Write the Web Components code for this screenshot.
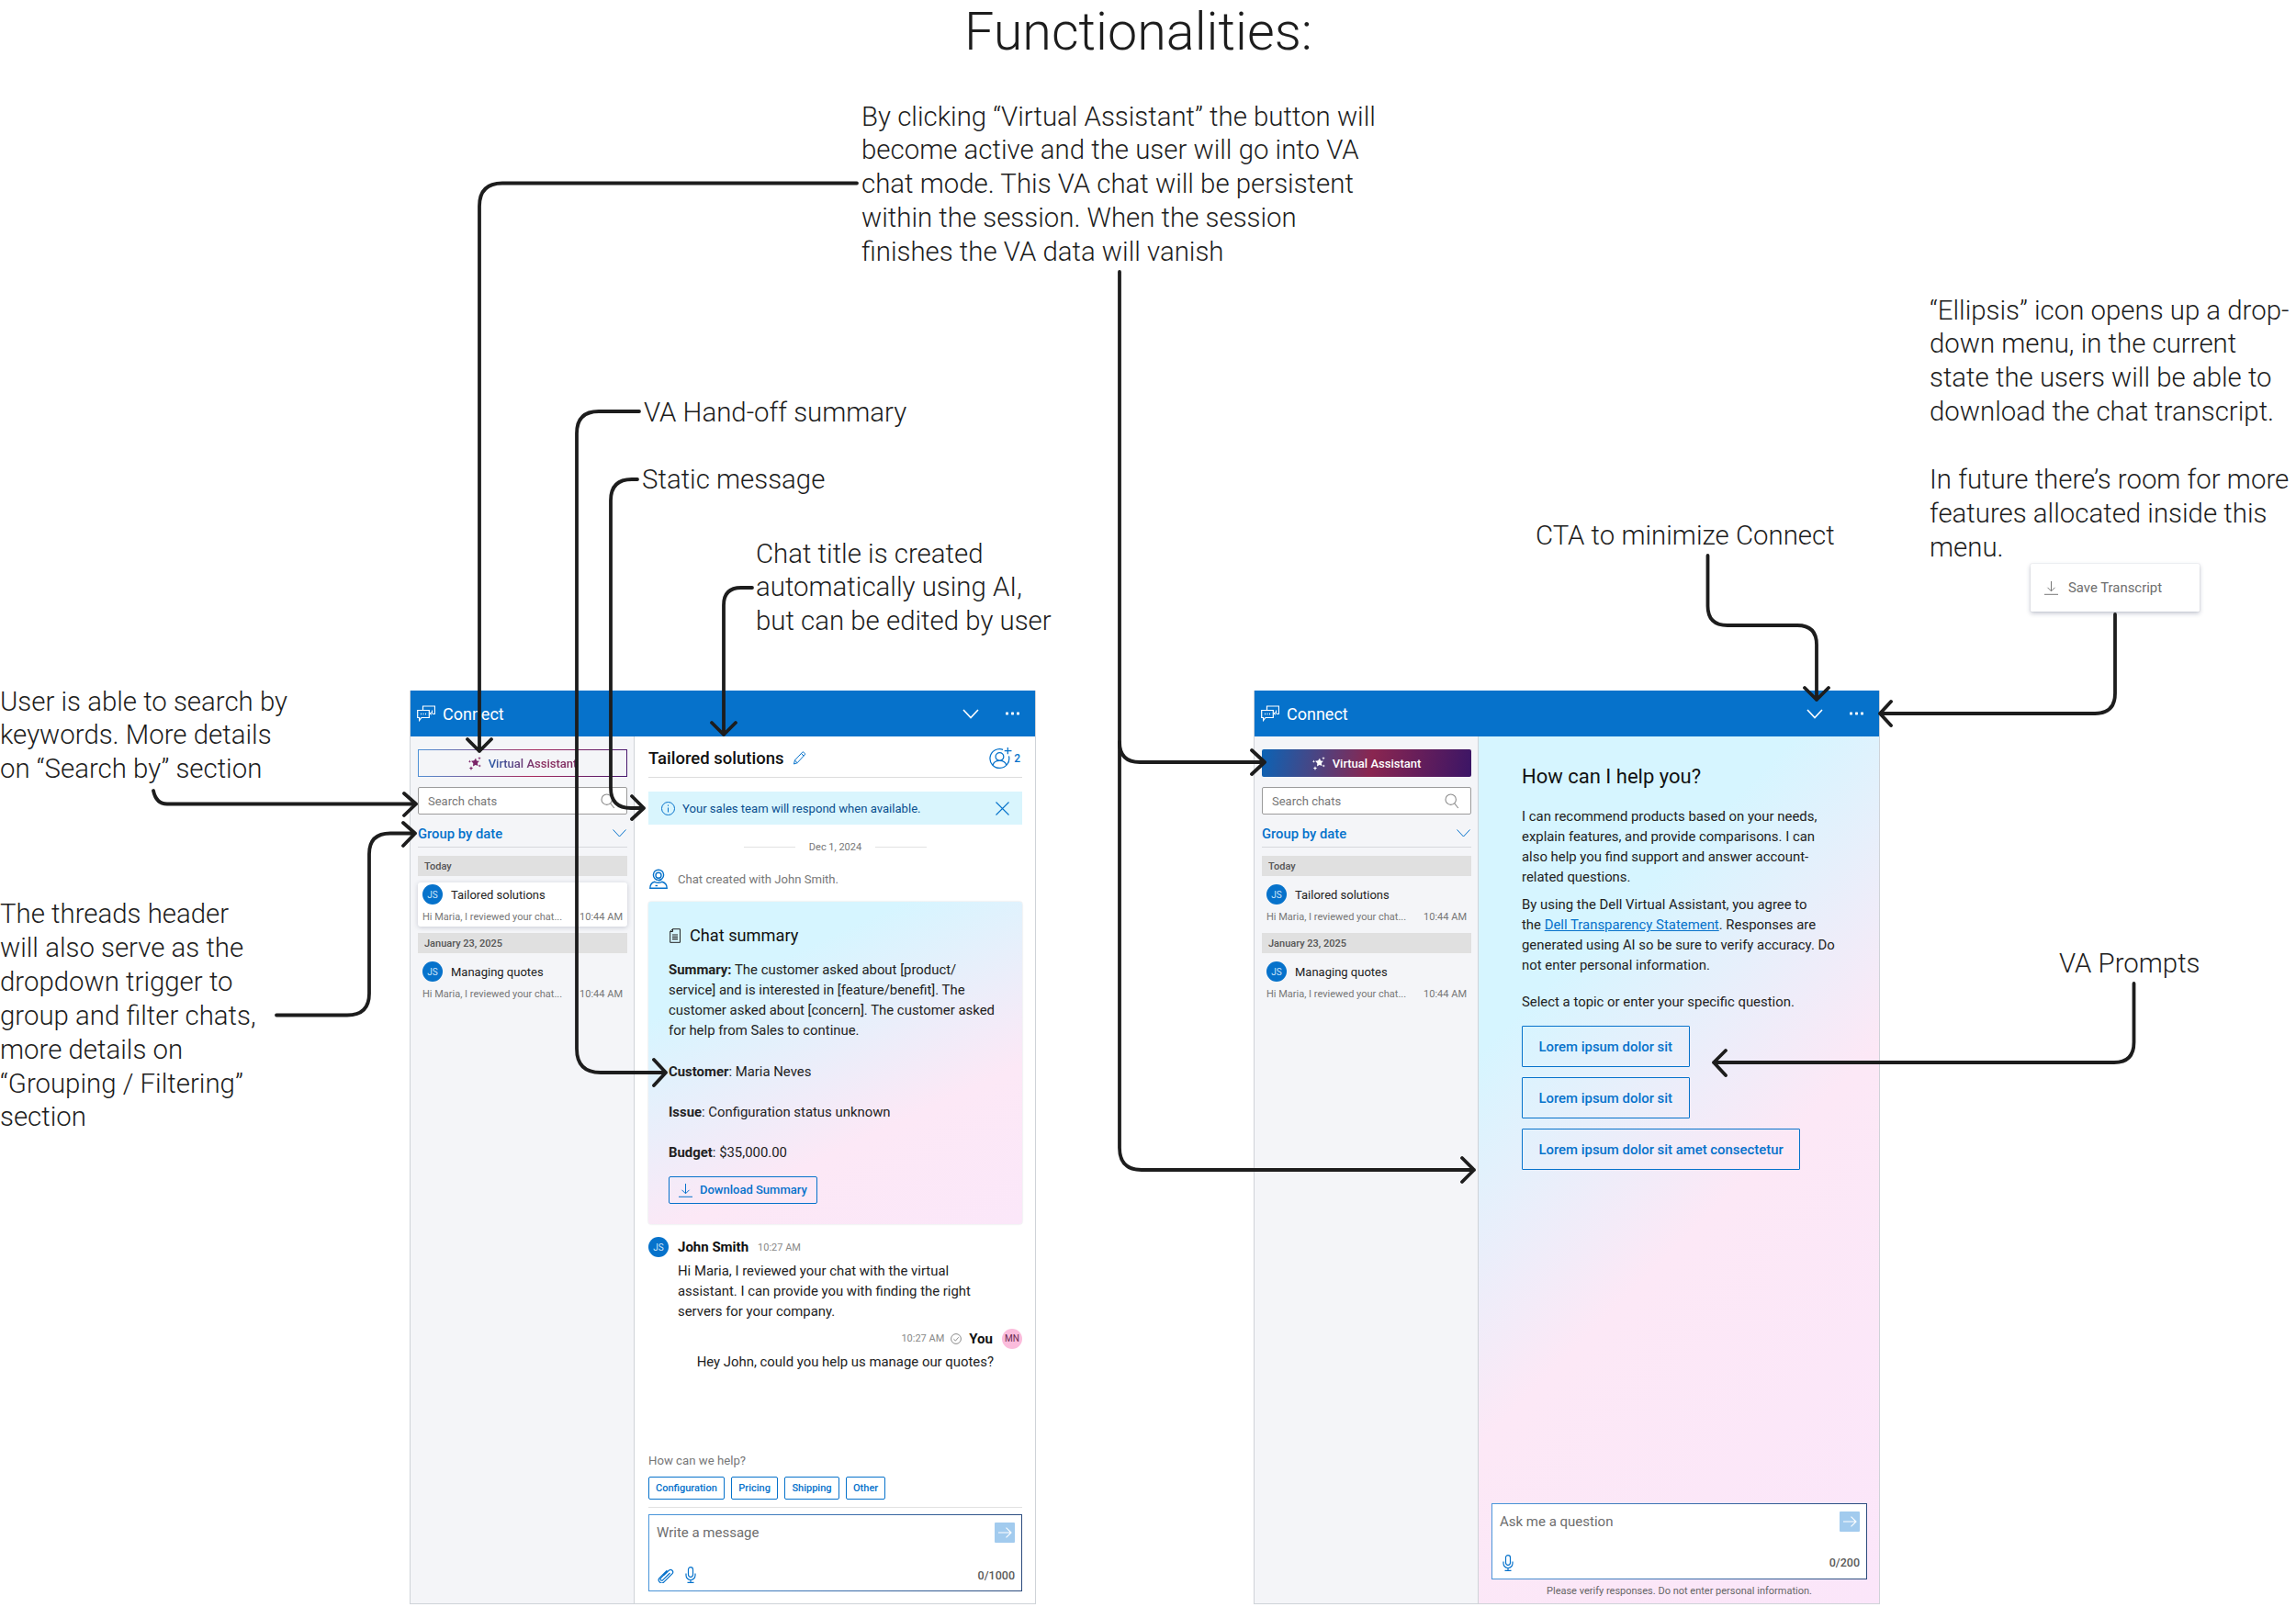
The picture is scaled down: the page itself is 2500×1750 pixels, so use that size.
<!DOCTYPE html>
<html>
<head>
<meta charset="utf-8">
<title>Functionalities</title>
<style>
  html, body { margin: 0; background: #fff; }
  body { font-family: Roboto, "Liberation Sans", sans-serif; }
</style>
</head>
<body>
<func-board></func-board>
<script>
// icons used in more than one component
const ICONS = {
  connect: `<svg width="20" height="18" viewBox="0 0 20 18" fill="none" stroke="#fff" stroke-width="1.2"><path d="M6.5 5V1h13v8.5H17"/><path d="M16.5 5.5v3.5h-2.5M14 9l1.6-1.4M14 9l1.6 1.4" stroke-width="1"/><path d="M.7 5.500h12.600v8H5L2.600 16.500v-3H.7z"/><path d="M4 9.500h1M6.500 9.500h1M9 9.500h1" stroke-width="1.300"/></svg>`,
  chevron: `<svg width="18" height="11" viewBox="0 0 18 11" fill="none" stroke="currentColor" stroke-width="1.6"><path d="M1 1l8 8.5L17 1"/></svg>`,
  chevronThin: `<svg width="15" height="9" viewBox="0 0 15 9" fill="none" stroke="currentColor" stroke-width="1"><path d="M.5.5l7 7.5 7-7.5"/></svg>`,
  dots: `<svg width="15" height="4" viewBox="0 0 15 4" fill="#fff"><rect x="0" y=".5" width="3" height="3" rx=".7"/><rect x="6" y=".5" width="3" height="3" rx=".7"/><rect x="12" y=".5" width="3" height="3" rx=".7"/></svg>`,
  sparkle: (c) => `<svg width="14" height="15" viewBox="0 0 14 15" fill="${c}"><path d="M8 1.800l1 2.600 2.900.4-2 2.300.6 3-2.800-1.200-2.700 1.500.3-3.100L3 4.800l3.100-.6z"/><path d="M12 0l.5 1.200 1.300.5-1.300.5-.5 1.300-.5-1.300-1.200-.5 1.200-.5zM3 10.300l.7 1.600 1.600.6-1.600.7-.7 1.700-.7-1.700-1.700-.7 1.700-.6zM1.400 3.600l.5 1.100 1.100.5-1.100.5-.5 1.100-.4-1.100-1-.5 1-.5zM12.200 8.400l.5 1.100 1.200.5-1.200.5-.5 1.100-.5-1.100-1.100-.5 1.100-.5z"/></svg>`,
  search: `<svg width="16" height="17" viewBox="0 0 16 17" fill="none" stroke="#8a8a8a" stroke-width="1.1"><circle cx="6.700" cy="6.700" r="5.700"/><path d="M10.800 11l4 5"/></svg>`,
  download: (c) => `<svg width="15" height="15" viewBox="0 0 15 15" fill="none" stroke="${c}" stroke-width="1"><path d="M7.500 0v10.500M3.500 6.800l4 4 4-4M0 14.300h15"/></svg>`,
  mic: `<svg width="12" height="18" viewBox="0 0 12 18" fill="none" stroke="#0672cb" stroke-width="1.2"><rect x="3.500" y=".7" width="5" height="10.600" rx="2.500"/><path d="M1 7.500v2a5 5 0 0 0 10 0v-2M6 14.500v2.800M2.500 17.300h7"/></svg>`,
  clip: `<svg width="20" height="17" viewBox="0 0 20 17" fill="none" stroke="#0672cb" stroke-width="1.2"><path d="M7.500 8.500l6-5.500a2.600 2.600 0 0 1 3.600 3.700l-9 9a3.300 3.300 0 0 1-5-4.400l8.200-8"/><path d="M14.500 6l-7.800 7.600a1.500 1.500 0 0 1-2.300-2l7.500-7.500"/></svg>`,
  send: `<svg width="15" height="12" viewBox="0 0 15 12" fill="none" stroke="#fff" stroke-width="1.1"><path d="M0 6h14M8.500.7L14 6l-5.500 5.300"/></svg>`,
  pencil: `<svg width="15" height="15" viewBox="0 0 14 15" fill="none" stroke="#0672cb" stroke-width="1"><path d="M1 14l.9-4L10 1.300a1.200 1.200 0 0 1 1.700 0l1 1a1.200 1.200 0 0 1 0 1.700L4.700 12.700z"/><path d="M1.900 10l2.800 2.700M9 2.500l2.700 2.700"/></svg>`,
  personAdd: `<svg width="25" height="24" viewBox="0 0 24 23" fill="none" stroke="#0672cb" stroke-width="1.2"><path d="M14.500 2.200A10 10 0 1 0 20.600 9"/><circle cx="11" cy="9.500" r="4.200"/><path d="M4 18.500c.5-3 3-4.800 7-4.800s6.400 1.800 7 4.800"/><path d="M19.500 0v7M16 3.500h7.500"/></svg>`,
  info: `<svg width="15" height="15" viewBox="0 0 15 15" fill="none" stroke="#0672cb" stroke-width="1"><circle cx="7.500" cy="7.500" r="7"/><path d="M7.500 6.500v5M7.500 3.500v1.300"/></svg>`,
  close: `<svg width="15" height="15" viewBox="0 0 15 15" fill="none" stroke="#0672cb" stroke-width="1.1"><path d="M.5.500l14 14M14.500.500l-14 14"/></svg>`,
  agent: `<svg width="20" height="22" viewBox="0 0 20 22" fill="none" stroke="#0672cb" stroke-width="1.4"><circle cx="10" cy="6.800" r="5.600"/><circle cx="10" cy="7.200" r="3"/><path d="M13.200 11.500c-.8 1-2 1.300-3.200 1.300"/><path d="M.8 21.300c0-3.800 2-6.200 5-7 2.500 1.200 5.500 1.200 8 0 3 .8 5.400 3.200 5.400 7z"/><path d="M6.500 18.500h2.500"/></svg>`,
  doc: `<svg width="12" height="16" viewBox="0 0 12 16" fill="none" stroke="#222" stroke-width="1"><path d="M3.500.7h8v14.600H.7V3.500z"/><path d="M3.500.7v2.800H.7"/><path d="M3 7h6M3 9.300h6M3 11.600h6" stroke-width="1.2"/></svg>`,
  check: `<svg width="12" height="12" viewBox="0 0 12 12" fill="none" stroke="#7d7d7d" stroke-width=".9"><circle cx="6" cy="6" r="5.400"/><path d="M3.400 6.200l2 1.900 3.300-3.800"/></svg>`
};

const BASE = `*{box-sizing:border-box} :host{font-family:Roboto,"Liberation Sans",sans-serif}`;

// a note on the canvas, with text lines passed in the slot
class AnnoNote extends HTMLElement {
  constructor() {
    super();
    this.attachShadow({ mode: 'open' });
    this.shadowRoot.innerHTML = `
      <style>
        ${BASE}
        :host {
          display: block;
          position: absolute;
          font-size: var(--size, 29.4px);
          line-height: var(--lh, 36.9px);
          font-weight: 300;
          color: #1d1d1d;
          white-space: nowrap;
        }
      </style>
      <slot></slot>`;
  }
}

class ConnectHeader extends HTMLElement {
  constructor() {
    super();
    this.attachShadow({ mode: 'open' });
    this.shadowRoot.innerHTML = `
      <style>
        ${BASE}
        :host {
          display: flex;
          align-items: center;
          height: 50px;
          background: #0672cb;
          color: #fff;
          padding: 0 17px 0 7px;
          flex: none;
        }
        .title { font-size: 18px; margin-left: 8px; flex: 1; }
        .chev { display: flex; margin-right: 29px; }
        .dots { display: flex; }
      </style>
      ${ICONS.connect}
      <span class="title">Connect</span>
      <span class="chev">${ICONS.chevron}</span>
      <span class="dots">${ICONS.dots}</span>`;
  }
}

class VaButton extends HTMLElement {
  constructor() {
    super();
    this.attachShadow({ mode: 'open' });
    const active = this.hasAttribute('active');
    this.shadowRoot.innerHTML = `
      <style>
        ${BASE}
        :host {
          display: flex;
          align-items: center;
          justify-content: center;
          gap: 8px;
          height: 30px;
          font-size: 13px;
          font-weight: 500;
          flex: none;
        }
        :host([active]) {
          background: linear-gradient(100deg, #0b63b5 0%, #8a2650 52%, #3b1566 100%);
          border-radius: 2px;
          color: #fff;
        }
        :host(:not([active])) {
          border: 1px solid;
          border-image: linear-gradient(100deg, #4d93d9 0%, #a8295d 55%, #45186e 100%) 1;
        }
        .grad {
          background: linear-gradient(90deg, #2a5aa8 0%, #8a2a5c 60%, #7a2a60 100%);
          -webkit-background-clip: text;
          background-clip: text;
          color: transparent;
        }
        svg { display: block; }
      </style>
      ${ICONS.sparkle(active ? '#fff' : '#7b2468')}
      <span class="${active ? '' : 'grad'}">Virtual Assistant</span>`;
  }
}

class ThreadItem extends HTMLElement {
  constructor() {
    super();
    this.attachShadow({ mode: 'open' });
    this.shadowRoot.innerHTML = `
      <style>
        ${BASE}
        :host {
          display: block;
          height: 48px;
          margin-top: 7px;
          padding: 2px 5px 0 5px;
          border-radius: 3px;
        }
        :host([selected]) { background: #fff; box-shadow: 0 1px 5px rgba(40,50,80,.22); }
        .top { display: flex; align-items: center; gap: 9px; height: 22px; font-size: 13px; color: #222; }
        .avatar {
          width: 22px; height: 22px; border-radius: 50%;
          background: #0672cb; color: #cfe6fa;
          font-size: 10px; display: flex; align-items: center; justify-content: center;
        }
        .sub {
          display: flex; justify-content: space-between; align-items: center;
          margin-top: 2px; height: 22px; font-size: 11px; color: #777;
        }
      </style>
      <div class="top"><span class="avatar">JS</span><span>${this.getAttribute('name')}</span></div>
      <div class="sub"><span>Hi Maria, I reviewed your chat...</span><span>10:44 AM</span></div>`;
  }
}

class ChatSidebar extends HTMLElement {
  constructor() {
    super();
    this.attachShadow({ mode: 'open' });
    const active = this.hasAttribute('active') ? 'active' : '';
    const selected = active ? '' : 'selected';
    this.shadowRoot.innerHTML = `
      <style>
        ${BASE}
        :host {
          display: flex;
          flex-direction: column;
          width: 244px;
          flex: none;
          background: #f4f5f8;
          border-right: 1px solid #cfd3d8;
          padding: 14px 7px 0 8px;
        }
        .search {
          display: flex; align-items: center; justify-content: space-between;
          height: 30px; margin-top: 11px; padding: 0 12px 0 10px;
          background: #fff; border: 1px solid #9b9b9b; border-radius: 2px;
          font-size: 13px; color: #777;
        }
        .group {
          display: flex; align-items: center; justify-content: space-between;
          height: 29px; margin-top: 7px; padding-right: 1px; padding-bottom: 1px;
          border-bottom: 1px solid #d6d8dc;
          color: #0672cb; font-size: 14.8px; font-weight: 500;
        }
        .band {
          height: 22px; display: flex; align-items: center;
          background: #e0e0e0; color: #555;
          font-size: 11px; font-weight: 500; padding-left: 7px; margin-top: 7px;
        }
        .group + .band { margin-top: 9px; }
        .group span:last-child { display: flex; }
      </style>
      <va-button ${active}></va-button>
      <div class="search"><span>Search chats</span>${ICONS.search}</div>
      <div class="group"><span>Group by date</span><span>${ICONS.chevronThin}</span></div>
      <div class="band">Today</div>
      <thread-item name="Tailored solutions" ${selected}></thread-item>
      <div class="band">January 23, 2025</div>
      <thread-item name="Managing quotes"></thread-item>`;
  }
}

class ChatComposer extends HTMLElement {
  constructor() {
    super();
    this.attachShadow({ mode: 'open' });
    const hasClip = this.hasAttribute('attach');
    this.shadowRoot.innerHTML = `
      <style>
        ${BASE}
        :host {
          display: flex;
          flex-direction: column;
          flex: none;
          height: var(--h, 84px);
          background: #fff;
          border: 1.5px solid;
          border-image: linear-gradient(100deg, #4a97dc 0%, #3b6fae 50%, #2b4a7c 100%) 1;
          padding: 8px 7px 6px 8px;
        }
        .top { display: flex; justify-content: space-between; color: #6e6e6e; font-size: 15px; line-height: 22px; }
        .send {
          width: 22px; height: 22px; background: #a2cbee; border-radius: 1px;
          display: flex; align-items: center; justify-content: center;
        }
        .bottom { display: flex; align-items: center; gap: 11px; margin-top: auto; height: 22px; }
        .bottom.mic-only { padding-left: 3px; }
        .count { margin-left: auto; font-size: 12.5px; font-weight: 500; color: #5a5a5a; }
        svg { display: block; }
      </style>
      <div class="top"><span>${this.getAttribute('placeholder')}</span><span class="send">${ICONS.send}</span></div>
      <div class="bottom ${hasClip ? '' : 'mic-only'}">${hasClip ? ICONS.clip : ''}${ICONS.mic}<span class="count">${this.getAttribute('count')}</span></div>`;
  }
}

class SummaryCard extends HTMLElement {
  constructor() {
    super();
    this.attachShadow({ mode: 'open' });
    this.shadowRoot.innerHTML = `
      <style>
        ${BASE}
        :host {
          display: block;
          flex: none;
          margin-top: 14px;
          height: 351px;
          padding: 25px 22px 0 22px;
          border-radius: 3px;
          background: linear-gradient(155deg, #d6f5ff 24%, #fce8f6 68%, #fbe7f9 100%);
          box-shadow: 0 0 1.5px rgba(60,70,90,.3);
          font-size: 14.9px;
          line-height: 22px;
          color: #222;
        }
        h3 {
          display: flex; align-items: center; gap: 10px;
          margin: 0 0 14px 0; height: 24px;
          font-size: 18.2px; font-weight: 400; color: #111;
          padding-left: 1px;
        }
        p { margin: 22px 0 0 0; white-space: nowrap; }
        p.first { margin: 0; }
        p.customer { margin-top: 23px; }
        b { font-weight: 700; }
        .dl {
          display: inline-flex; align-items: center; gap: 8px;
          height: 30px; margin-top: 15px; padding: 0 10px;
          border: 1px solid #0672cb; border-radius: 2px;
          color: #0672cb; font-size: 13px; font-weight: 500;
        }
      </style>
      <h3>${ICONS.doc}<span>Chat summary</span></h3>
      <p class="first"><b>Summary:</b> The customer asked about [product/<br>service] and is interested in [feature/benefit]. The<br>customer asked about [concern]. The customer asked<br>for help from Sales to continue.</p>
      <p class="customer"><b>Customer</b>: Maria Neves</p>
      <p><b>Issue</b>: Configuration status unknown</p>
      <p><b>Budget</b>: $35,000.00</p>
      <span class="dl">${ICONS.download('#0672cb')}<span>Download Summary</span></span>`;
  }
}

class ChatThread extends HTMLElement {
  constructor() {
    super();
    this.attachShadow({ mode: 'open' });
    this.shadowRoot.innerHTML = `
      <style>
        ${BASE}
        :host {
          display: flex;
          flex-direction: column;
          flex: 1;
          min-width: 0;
          background: #fff;
          padding: 0 14px 13px 15px;
          font-size: 14.9px;
          color: #222;
        }
        .title {
          display: flex; align-items: center; height: 45px; padding-top: 3px; flex: none;
          border-bottom: 1px solid #dcdcdc;
          font-size: 18.5px; font-weight: 500; color: #111;
        }
        .title svg { margin-left: 10px; }
        .people { margin-left: auto; margin-right: 2px; display: flex; align-items: center; gap: 2px; color: #0672cb; font-size: 12px; font-weight: 500; }
        .people svg { margin: 0; }
        .banner {
          display: flex; align-items: center; gap: 8px;
          height: 36px; margin-top: 15px; padding: 0 14px; flex: none;
          background: #d9f5fd; color: #0a4f8f; font-size: 13.1px;
        }
        .banner svg:last-child { margin-left: auto; }
        .date {
          display: flex; align-items: center; justify-content: center; gap: 15px; flex: none;
          height: 16px; margin-top: 16px; font-size: 11px; color: #777;
        }
        .date i { width: 56px; height: 1px; background: #e2e2e2; }
        .created { display: flex; align-items: center; gap: 12px; height: 22px; margin-top: 16px; padding-left: 1px; color: #777; font-size: 13.1px; flex: none; }
        .created span { margin-left: -1px; }
        .msg-head { display: flex; align-items: center; height: 22px; margin-top: 14px; flex: none; }
        .avatar {
          width: 22px; height: 22px; border-radius: 50%;
          background: #0672cb; color: #cfe6fa;
          font-size: 10px; display: flex; align-items: center; justify-content: center;
        }
        .avatar.me { background: #fbbcdc; color: #6a2a50; }
        .msg-head b { font-weight: 700; margin-left: 10px; font-size: 15px; color: #111; }
        .time { font-size: 11px; color: #888; margin-left: 10px; }
        .msg { margin: 4px 0 0 32px; line-height: 22px; white-space: nowrap; }
        .mine { justify-content: flex-end; margin-top: 7.5px; }
        .mine .check { display: flex; margin-left: 7px; }
        .mine b { margin-left: 8px; margin-right: 10px; }
        .msg-mine { margin: 3.5px 31px 0 0; line-height: 22px; text-align: right; white-space: nowrap; }
        .spacer { flex: 1; }
        .help { font-size: 13.2px; line-height: 22px; color: #777; }
        .chips { display: flex; gap: 7.5px; margin-top: 5.5px; flex: none; }
        .chip {
          display: flex; align-items: center; height: 25.5px; padding: 0 7px;
          border: 1px solid #0672cb; border-radius: 2px;
          color: #0672cb; font-size: 11px; font-weight: 500;
        }
        .rule { height: 1px; background: #e2e2e2; margin: 7.5px 0 7.5px 0; flex: none; }
      </style>
      <div class="title">Tailored solutions ${ICONS.pencil}<span class="people">${ICONS.personAdd}<span>2</span></span></div>
      <div class="banner">${ICONS.info}<span>Your sales team will respond when available.</span>${ICONS.close}</div>
      <div class="date"><i></i><span>Dec 1, 2024</span><i></i></div>
      <div class="created">${ICONS.agent}<span>Chat created with John Smith.</span></div>
      <summary-card></summary-card>
      <div class="msg-head"><span class="avatar">JS</span><b>John Smith</b><span class="time">10:27 AM</span></div>
      <div class="msg">Hi Maria, I reviewed your chat with the virtual<br>assistant. I can provide you with finding the right<br>servers for your company.</div>
      <div class="msg-head mine"><span class="time">10:27 AM</span><span class="check">${ICONS.check}</span><b>You</b><span class="avatar me">MN</span></div>
      <div class="msg-mine">Hey John, could you help us manage our quotes?</div>
      <div class="spacer"></div>
      <div class="help">How can we help?</div>
      <div class="chips"><span class="chip">Configuration</span><span class="chip">Pricing</span><span class="chip">Shipping</span><span class="chip">Other</span></div>
      <div class="rule"></div>
      <chat-composer placeholder="Write a message" count="0/1000" attach></chat-composer>`;
  }
}

class VaThread extends HTMLElement {
  constructor() {
    super();
    this.attachShadow({ mode: 'open' });
    this.shadowRoot.innerHTML = `
      <style>
        ${BASE}
        :host {
          display: flex;
          flex-direction: column;
          flex: 1;
          min-width: 0;
          background: linear-gradient(135deg, #d6f5ff 25%, #fce8f6 56%, #fbe6fa 100%);
          padding: 29px 13px 0 14px;
          font-size: 14.9px;
          line-height: 22px;
          color: #222;
        }
        .body { padding-left: 33px; flex: 1; }
        h2 { margin: 0; height: 30px; font-size: 22px; line-height: 30px; font-weight: 400; color: #111; }
        p { margin: 8px 0 0 0; white-space: nowrap; }
        p.a { margin-top: 17px; }
        p.c { margin-top: 18px; }
        a { color: #0672cb; text-decoration: underline; }
        .prompts { display: flex; flex-direction: column; align-items: flex-start; gap: 11px; margin-top: 15px; }
        .prompt {
          display: flex; align-items: center; height: 45px; padding: 0 17.5px;
          border: 1px solid #0672cb; border-radius: 1px;
          color: #0672cb; font-weight: 500; font-size: 14.9px;
        }
        chat-composer { --h: 83px; }
        .note { height: 26px; display: flex; align-items: center; justify-content: center; font-size: 11px; color: #666; }
      </style>
      <div class="body">
        <h2>How can I help you?</h2>
        <p class="a">I can recommend products based on your needs,<br>explain features, and provide comparisons. I can<br>also help you find support and answer account-<br>related questions.</p>
        <p>By using the Dell Virtual Assistant, you agree to<br>the <a>Dell Transparency Statement</a>. Responses are<br>generated using AI so be sure to verify accuracy. Do<br>not enter personal information.</p>
        <p class="c">Select a topic or enter your specific question.</p>
        <div class="prompts">
          <span class="prompt">Lorem ipsum dolor sit</span>
          <span class="prompt">Lorem ipsum dolor sit</span>
          <span class="prompt">Lorem ipsum dolor sit amet consectetur</span>
        </div>
      </div>
      <chat-composer placeholder="Ask me a question" count="0/200"></chat-composer>
      <div class="note">Please verify responses. Do not enter personal information.</div>`;
  }
}

class ConnectPanel extends HTMLElement {
  constructor() {
    super();
    this.attachShadow({ mode: 'open' });
    const active = this.hasAttribute('active') ? 'active' : '';
    this.shadowRoot.innerHTML = `
      <style>
        ${BASE}
        :host {
          display: flex;
          flex-direction: column;
          position: absolute;
          top: 752px;
          width: 682px;
          height: 995px;
          border: 1px solid #cfd3d8;
          border-top: 0;
        }
        .body { display: flex; flex: 1; min-height: 0; }
      </style>
      <connect-header></connect-header>
      <div class="body">
        <chat-sidebar ${active}></chat-sidebar>
        ${active ? '<va-thread></va-thread>' : '<chat-thread></chat-thread>'}
      </div>`;
  }
}

class SaveMenu extends HTMLElement {
  constructor() {
    super();
    this.attachShadow({ mode: 'open' });
    this.shadowRoot.innerHTML = `
      <style>
        ${BASE}
        :host {
          display: flex;
          align-items: center;
          gap: 11px;
          position: absolute;
          left: 2211px; top: 614px;
          width: 184px; height: 52px;
          padding-left: 15px;
          background: #fff;
          border-radius: 1px;
          box-shadow: 0 0 1px rgba(40,50,90,.4), 0 2px 5px rgba(40,50,90,.28);
          font-size: 14.9px;
          color: #6e6e6e;
        }
      </style>
      ${ICONS.download('#777')}<span>Save Transcript</span>`;
  }
}

// the connector lines drawn over everything
class ArrowLayer extends HTMLElement {
  constructor() {
    super();
    this.attachShadow({ mode: 'open' });
    const paths = [
      // Virtual Assistant
      'M933 199.5H547Q522 199.5 522 224.5V818M509 805L522 818L535 805',
      // hand-off summary
      'M696 448H652Q628 448 628 472V1142Q628 1168 654 1168H725M712 1154L725 1168L712 1182',
      // static message
      'M694 522H688Q665 522 665 545V858Q665 880 687 880H701M688 867L701 880L688 892',
      // chat title
      'M819 640H807Q788 640 788 659V800M775 787L788 800L801 787',
      // VA data
      'M1219 296V1250Q1219 1274 1243 1274H1605M1592 1261L1605 1274L1592 1287',
      'M1219 808Q1219 830 1241 830H1377M1363 817L1377 830L1363 843',
      // search
      'M167 861Q170 875.5 182 875.5H453M440 864L453 875.5L440 888',
      // group
      'M301 1105.5H378Q402 1105.5 402 1082V930Q402 907.5 425 907.5H452M439 896L452 907.5L439 921',
      // minimize
      'M1859.5 605V660Q1859.5 681 1881 681H1957Q1978 681 1978 702V762M1965 749L1978 762L1991 749',
      // ellipsis
      'M2303 669V755Q2303 777 2281 777H2047M2059 764L2047 777L2059 790',
      // prompts
      'M2323.5 1071V1135Q2323.5 1157 2302 1157H1866M1879 1144L1866 1157L1879 1171'
    ];
    this.shadowRoot.innerHTML = `
      <style>
        :host { display: block; position: absolute; left: 0; top: 0; width: 2500px; height: 1750px; pointer-events: none; }
        svg { display: block; }
      </style>
      <svg width="2500" height="1750" viewBox="0 0 2500 1750" fill="none" stroke="#1d1d1d" stroke-width="3.8" stroke-linecap="round" stroke-linejoin="round">
        ${paths.map((d) => `<path d="${d}"/>`).join('')}
      </svg>`;
  }
}

class FuncBoard extends HTMLElement {
  constructor() {
    super();
    this.attachShadow({ mode: 'open' });
    this.shadowRoot.innerHTML = `
      <style>
        ${BASE}
        :host { display: block; position: relative; width: 2500px; height: 1750px; overflow: hidden; background: #fff; }
        .h { --size: 57.5px; --lh: 68px; }
      </style>
      <anno-note class="h" style="left:1050px;top:1px">Functionalities:</anno-note>
      <anno-note style="left:938px;top:108.5px">By clicking “Virtual Assistant” the button will<br>become active and the user will go into VA<br>chat mode. This VA chat will be persistent<br>within the session. When the session<br>finishes the VA data will vanish</anno-note>
      <anno-note style="left:701px;top:430.5px">VA Hand-off summary</anno-note>
      <anno-note style="left:699px;top:503.5px">Static message</anno-note>
      <anno-note style="left:823px;top:584.5px">Chat title is created<br>automatically using AI,<br>but can be edited by user</anno-note>
      <anno-note style="left:0;top:745.5px">User is able to search by<br>keywords. More details<br>on “Search by” section</anno-note>
      <anno-note style="left:0;top:977px">The threads header<br>will also serve as the<br>dropdown trigger to<br>group and filter chats,<br>more details on<br>“Grouping / Filtering”<br>section</anno-note>
      <anno-note style="left:2101px;top:319.5px">“Ellipsis” icon opens up a drop-<br>down menu, in the current<br>state the users will be able to<br>download the chat transcript.<br><br>In future there’s room for more<br>features allocated inside this<br>menu.</anno-note>
      <anno-note style="left:1672px;top:564.5px">CTA to minimize Connect</anno-note>
      <anno-note style="left:2242px;top:1031px">VA Prompts</anno-note>
      <save-menu></save-menu>
      <connect-panel style="left:446px"></connect-panel>
      <connect-panel active style="left:1365px"></connect-panel>
      <arrow-layer></arrow-layer>`;
  }
}

customElements.define('anno-note', AnnoNote);
customElements.define('connect-header', ConnectHeader);
customElements.define('va-button', VaButton);
customElements.define('thread-item', ThreadItem);
customElements.define('chat-sidebar', ChatSidebar);
customElements.define('chat-composer', ChatComposer);
customElements.define('summary-card', SummaryCard);
customElements.define('chat-thread', ChatThread);
customElements.define('va-thread', VaThread);
customElements.define('connect-panel', ConnectPanel);
customElements.define('save-menu', SaveMenu);
customElements.define('arrow-layer', ArrowLayer);
customElements.define('func-board', FuncBoard);
</script>
</body>
</html>
